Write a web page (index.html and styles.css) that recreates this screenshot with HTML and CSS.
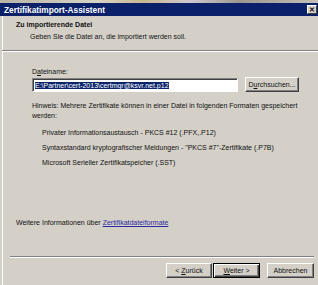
FILE: index.html
```html
<html>
<head>
  <link rel="stylesheet" href="styles.css">
</head>
<body>
  <div class="strip"></div>
  <div class="window">
    <div class="titlebar">
      <span class="title">Zertifikatimport-Assistent</span>
      <span class="close">&#x2715;</span>
    </div>

    <div class="header">
      <div class="head-title">Zu importierende Datei</div>
      <div class="head-sub">Geben Sie die Datei an, die importiert werden soll.</div>
    </div>

    <div class="content">
      <div class="label">D<u>a</u>teiname:</div>
      <div class="file-row">
        <div class="input"><span class="selected">E:\Partner\cert-2013\certmgr@ksvr.net.p12</span></div>
        <button type="button" class="btn browse">D<u>u</u>rchsuchen...</button>
      </div>

      <div class="hint">Hinweis: Mehrere Zertifikate können in einer Datei in folgenden Formaten gespeichert<br>werden:</div>
      <div class="format first">Privater Informationsaustausch - PKCS #12 (.PFX,.P12)</div>
      <div class="format">Syntaxstandard kryptografischer Meldungen - "PKCS #7"-Zertifikate (.P7B)</div>
      <div class="format">Microsoft Serieller Zertifikatspeicher (.SST)</div>

      <div class="more">Weitere Informationen über <a href="#">Zertifikatdateiformate</a></div>
    </div>

    <div class="footer">
      <div class="buttons">
        <button type="button" class="btn">&lt; <u>Z</u>urück</button>
        <button type="button" class="btn default"><u>W</u>eiter &gt;</button>
        <button type="button" class="btn cancel">Abbrechen</button>
      </div>
    </div>
  </div>
</body>
</html>
```

FILE: styles.css
```css
body {
  margin: 0;
  width: 318px;
  height: 285px;
  overflow: hidden;
  background: #d4d0c8;
  font-family: "Liberation Sans", Arial, sans-serif;
  font-size: 7px;
  color: #111;
}

.strip {
  height: 3px;
  background: linear-gradient(90deg, #b8b4a8, #d8d4c4 30%, #c8b890 45%, #d0c8d0 60%, #9c9890 75%, #c4c0b8);
}

.window {
  height: 282px;
  display: flex;
  flex-direction: column;
  border-left: 2px solid #d4d0c8;
  box-shadow: inset 1px 0 #ffffff;
}

.titlebar {
  height: 13px;
  margin-left: -2px;
  background: #0a2068;
  display: flex;
  align-items: center;
  justify-content: space-between;
  padding: 0 1px 0 4px;
}

.title {
  color: #fff;
  font-weight: bold;
  font-size: 8.3px;
}

.close {
  width: 10px;
  height: 9px;
  background: #d4d0c8;
  border: 1px solid;
  border-color: #fff #404040 #404040 #fff;
  box-sizing: border-box;
  font-size: 7px;
  font-weight: bold;
  line-height: 7px;
  text-align: center;
}

.header {
  padding: 4px 0 8px 14px;
  border-bottom: 1px solid #808080;
  box-shadow: 0 1px #fff;
  line-height: 10px;
}

.head-title {
  font-weight: bold;
}

.head-sub {
  margin-top: 2px;
  padding-left: 14px;
}

.content {
  flex: 1;
  padding: 16px 0 0 30px;
  line-height: 10px;
}

.file-row {
  display: flex;
  align-items: center;
  gap: 7px;
}

.input {
  width: 206px;
  height: 14px;
  box-sizing: border-box;
  background: #fff;
  border: 1px solid;
  border-color: #808080 #fff #fff #808080;
  box-shadow: inset 1px 1px #404040;
  padding: 2px 0 0 2px;
  line-height: 10px;
}

.selected {
  background: #0a246a;
  color: #fff;
}

.btn {
  font-family: inherit;
  font-size: 7px;
  height: 15px;
  padding: 0;
  background: #d4d0c8;
  color: #111;
  border: 1px solid;
  border-color: #fff #404040 #404040 #fff;
  box-shadow: inset -1px -1px #808080;
}

.browse {
  width: 54px;
}

.hint {
  margin-top: 9px;
}

.format {
  margin-top: 5px;
  padding-left: 10px;
}

.format.first {
  margin-top: 7px;
}

.more {
  margin-top: 50px;
  margin-left: -16px;
}

.more a {
  color: #2a2aa0;
}

.footer {
  margin: 0 4px 0 8px;
  border-top: 1px solid #808080;
  box-shadow: inset 0 1px #fff;
  height: 29px;
  box-sizing: border-box;
  padding-top: 6px;
}

.buttons {
  display: flex;
  justify-content: flex-end;
  gap: 1px;
}

.buttons .btn {
  width: 46px;
}

.buttons .default {
  border: 1px solid #000;
  box-shadow: inset 1px 1px #fff, inset -1px -1px #404040, inset -2px -2px #808080;
  width: 47px;
}

.buttons .cancel {
  margin-left: 6px;
  width: 47px;
}
```
